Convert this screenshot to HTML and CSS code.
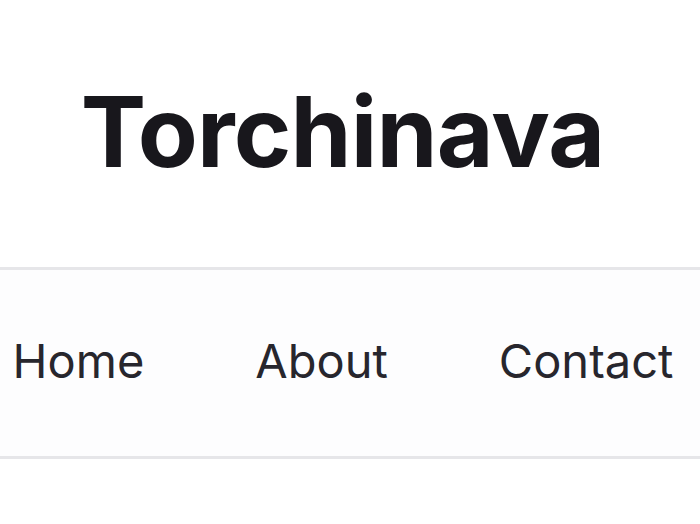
FILE: index.html
```html
<!DOCTYPE html>
<html>
<head>
<meta charset="utf-8">
<link rel="stylesheet" href="styles.css">
</head>
<body>
<header class="header">
  <h1 class="title">Torchinava</h1>
</header>
<nav class="nav">
  <a class="nav-link" href="#">Home</a>
  <a class="nav-link" href="#">About</a>
  <a class="nav-link" href="#">Contact</a>
</nav>
</body>
</html>
```
FILE: styles.css
```css
html, body {
  margin: 0;
  padding: 0;
  background: #ffffff;
  font-family: Inter, "Liberation Sans", sans-serif;
}
.header {
  height: 270px;
  box-sizing: border-box;
  padding: 83px 15px 0 0;
  border-bottom: 3px solid #e6e6e9;
  text-align: center;
}
.title {
  margin: 0;
  font-size: 98px;
  line-height: 98px;
  font-weight: 700;
  color: #18171c;
  letter-spacing: -0.8px;
}
.nav {
  height: 189px;
  box-sizing: border-box;
  padding: 67px 14px 0 0;
  border-bottom: 3px solid #e6e6e9;
  background: #fdfdfe;
  display: flex;
  align-items: flex-start;
  justify-content: center;
  gap: 111px;
}
.nav-link {
  font-size: 47px;
  line-height: 47px;
  color: #27262d;
  text-decoration: none;
}
```
